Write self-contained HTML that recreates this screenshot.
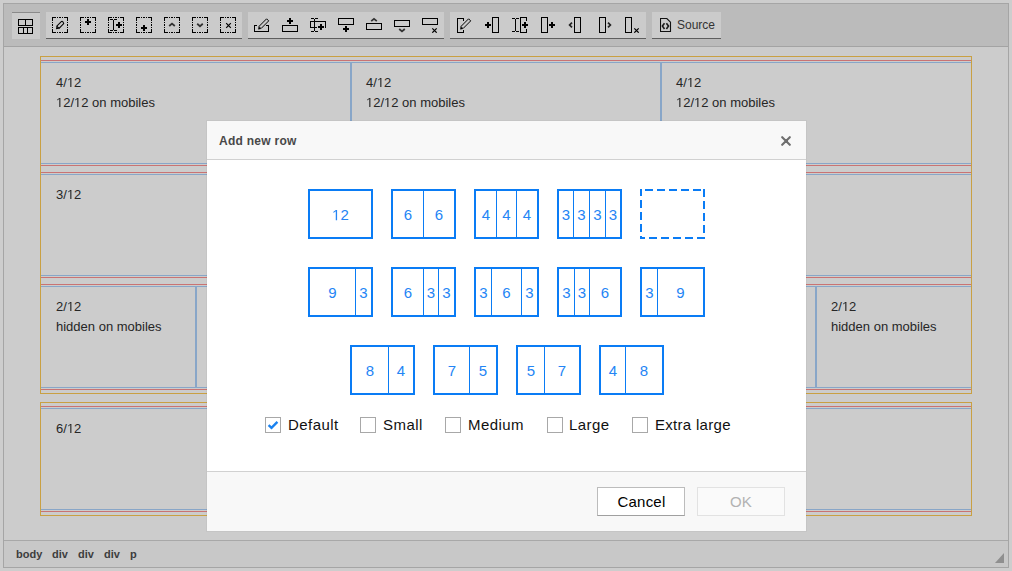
<!DOCTYPE html><html><head><meta charset="utf-8"><style>
*{box-sizing:border-box;margin:0;padding:0}
html,body{width:1012px;height:571px;overflow:hidden;background:#cdcdcd;font-family:"Liberation Sans",sans-serif}
.a{position:absolute}
.one{display:inline-block;width:0.5562em;height:0;position:relative}
.one svg{position:absolute;left:0;bottom:0;width:0.5562em;height:0.688em;overflow:visible}
svg rect{shape-rendering:crispEdges}
#ed{left:3px;top:3px;width:1006px;height:565px;border:1px solid #a5a5a5;background:#cccccc}
#tb{left:4px;top:4px;width:1004px;height:43px;background:#bbbbbb;border-bottom:1px solid #a3a3a3}
.grp{top:12px;height:27px;background:#cbcbcb;border-bottom:1px solid #5e5e5e}
#st{left:4px;top:540px;width:1004px;height:27px;border-top:1px solid #a8a8a8;background:#c8c8c8}
.path{top:547px;font-size:11px;font-weight:bold;color:#3d3d3d;line-height:14px}
.ctr{border:1px solid #c9a043}
.h1{height:1px}
.red{background:#c97373}
.blu{background:#88a6c8}
.txt{font-size:13px;line-height:20px;color:#262626;white-space:nowrap}
#dlg{left:207px;top:121px;width:599px;height:410px;background:#fff;box-shadow:0 0 0 1px rgba(0,0,0,.03)}
#dt{left:0;top:0;width:599px;height:39px;background:#f8f8f8;border-bottom:1px solid #d1d1d1}
#df{left:0;top:350px;width:599px;height:60px;background:#f8f8f8;border-top:1px solid #d1d1d1}
.bx{width:65px;height:50px;border:2px solid #0a7cf5}
.n{top:15px;font-size:15px;line-height:17px;color:#2485f5;text-align:center}
.dv{top:0;width:1px;height:46px;background:#0a7cf5}
.cb{top:417px;width:16px;height:16px;border:1px solid #a8a8a8;background:#fff}
.lbl{top:415px;font-size:15px;line-height:20px;color:#111;letter-spacing:0.45px;white-space:nowrap}
.btn{top:487px;width:88px;height:29px;font-size:15px;line-height:27px;text-align:center;letter-spacing:0.2px}
</style></head><body>
<div id="ed" class="a"></div><div id="tb" class="a"></div>
<div class="a grp" style="left:12px;width:28px;border-bottom:0;border-top:1px solid #8a8a8a"></div>
<div class="a grp" style="left:46px;width:196px"></div>
<div class="a grp" style="left:248px;width:196px"></div>
<div class="a grp" style="left:450px;width:196px"></div>
<div class="a grp" style="left:652px;width:69px"></div>
<svg class="a" style="left:18px;top:19px" width="16" height="16" viewBox="0 0 16 16"><rect x="0" y="0" width="15" height="1" fill="#000"/><rect x="0" y="6" width="15" height="1" fill="#000"/><rect x="0" y="0" width="1" height="7" fill="#000"/><rect x="14" y="0" width="1" height="7" fill="#000"/><rect x="7" y="0" width="1" height="7" fill="#000"/><rect x="0" y="8" width="15" height="1" fill="#000"/><rect x="0" y="14" width="15" height="1" fill="#000"/><rect x="0" y="8" width="1" height="7" fill="#000"/><rect x="14" y="8" width="1" height="7" fill="#000"/><rect x="5" y="8" width="1" height="7" fill="#000"/><rect x="9" y="8" width="1" height="7" fill="#000"/></svg>
<svg class="a" style="left:52px;top:17px" width="16" height="16" viewBox="0 0 16 16"><rect x="0" y="0" width="4" height="1" fill="#000"/><rect x="0" y="15" width="4" height="1" fill="#000"/><rect x="0" y="0" width="1" height="4" fill="#000"/><rect x="15" y="0" width="1" height="4" fill="#000"/><rect x="5" y="0" width="1" height="1" fill="#000"/><rect x="5" y="15" width="1" height="1" fill="#000"/><rect x="0" y="5" width="1" height="1" fill="#000"/><rect x="15" y="5" width="1" height="1" fill="#000"/><rect x="7" y="0" width="2" height="1" fill="#000"/><rect x="7" y="15" width="2" height="1" fill="#000"/><rect x="0" y="7" width="1" height="2" fill="#000"/><rect x="15" y="7" width="1" height="2" fill="#000"/><rect x="10" y="0" width="1" height="1" fill="#000"/><rect x="10" y="15" width="1" height="1" fill="#000"/><rect x="0" y="10" width="1" height="1" fill="#000"/><rect x="15" y="10" width="1" height="1" fill="#000"/><rect x="12" y="0" width="4" height="1" fill="#000"/><rect x="12" y="15" width="4" height="1" fill="#000"/><rect x="0" y="12" width="1" height="4" fill="#000"/><rect x="15" y="12" width="1" height="4" fill="#000"/><path d="M4.8 9.2 L9.5 4.5 Q10.9 3.7 11.7 6.7 L7.0 11.4 Z" fill="none" stroke="#000" stroke-width="1.05"/><path d="M4.5 9.4 L6.8 11.7 L3.9 12.3 Z" fill="#000"/></svg>
<svg class="a" style="left:80px;top:17px" width="16" height="16" viewBox="0 0 16 16"><rect x="0" y="0" width="4" height="1" fill="#000"/><rect x="0" y="15" width="4" height="1" fill="#000"/><rect x="0" y="0" width="1" height="4" fill="#000"/><rect x="15" y="0" width="1" height="4" fill="#000"/><rect x="5" y="0" width="1" height="1" fill="#000"/><rect x="5" y="15" width="1" height="1" fill="#000"/><rect x="0" y="5" width="1" height="1" fill="#000"/><rect x="15" y="5" width="1" height="1" fill="#000"/><rect x="7" y="0" width="2" height="1" fill="#000"/><rect x="7" y="15" width="2" height="1" fill="#000"/><rect x="0" y="7" width="1" height="2" fill="#000"/><rect x="15" y="7" width="1" height="2" fill="#000"/><rect x="10" y="0" width="1" height="1" fill="#000"/><rect x="10" y="15" width="1" height="1" fill="#000"/><rect x="0" y="10" width="1" height="1" fill="#000"/><rect x="15" y="10" width="1" height="1" fill="#000"/><rect x="12" y="0" width="4" height="1" fill="#000"/><rect x="12" y="15" width="4" height="1" fill="#000"/><rect x="0" y="12" width="1" height="4" fill="#000"/><rect x="15" y="12" width="1" height="4" fill="#000"/><rect x="5" y="4" width="6" height="2" fill="#000"/><rect x="7" y="2" width="2" height="6" fill="#000"/></svg>
<svg class="a" style="left:108px;top:17px" width="16" height="16" viewBox="0 0 16 16"><rect x="0" y="0" width="4" height="1" fill="#000"/><rect x="0" y="15" width="4" height="1" fill="#000"/><rect x="0" y="0" width="1" height="4" fill="#000"/><rect x="15" y="0" width="1" height="4" fill="#000"/><rect x="5" y="0" width="1" height="1" fill="#000"/><rect x="5" y="15" width="1" height="1" fill="#000"/><rect x="0" y="5" width="1" height="1" fill="#000"/><rect x="15" y="5" width="1" height="1" fill="#000"/><rect x="7" y="0" width="2" height="1" fill="#000"/><rect x="7" y="15" width="2" height="1" fill="#000"/><rect x="0" y="7" width="1" height="2" fill="#000"/><rect x="15" y="7" width="1" height="2" fill="#000"/><rect x="10" y="0" width="1" height="1" fill="#000"/><rect x="10" y="15" width="1" height="1" fill="#000"/><rect x="0" y="10" width="1" height="1" fill="#000"/><rect x="15" y="10" width="1" height="1" fill="#000"/><rect x="12" y="0" width="4" height="1" fill="#000"/><rect x="12" y="15" width="4" height="1" fill="#000"/><rect x="0" y="12" width="1" height="4" fill="#000"/><rect x="15" y="12" width="1" height="4" fill="#000"/><rect x="2" y="2" width="3" height="1" fill="#000"/><rect x="6" y="2" width="3" height="1" fill="#000"/><rect x="5" y="3" width="1" height="10" fill="#000"/><rect x="2" y="13" width="3" height="1" fill="#000"/><rect x="6" y="13" width="3" height="1" fill="#000"/><rect x="8" y="7" width="6" height="2" fill="#000"/><rect x="10" y="5" width="2" height="6" fill="#000"/></svg>
<svg class="a" style="left:136px;top:17px" width="16" height="16" viewBox="0 0 16 16"><rect x="0" y="0" width="4" height="1" fill="#000"/><rect x="0" y="15" width="4" height="1" fill="#000"/><rect x="0" y="0" width="1" height="4" fill="#000"/><rect x="15" y="0" width="1" height="4" fill="#000"/><rect x="5" y="0" width="1" height="1" fill="#000"/><rect x="5" y="15" width="1" height="1" fill="#000"/><rect x="0" y="5" width="1" height="1" fill="#000"/><rect x="15" y="5" width="1" height="1" fill="#000"/><rect x="7" y="0" width="2" height="1" fill="#000"/><rect x="7" y="15" width="2" height="1" fill="#000"/><rect x="0" y="7" width="1" height="2" fill="#000"/><rect x="15" y="7" width="1" height="2" fill="#000"/><rect x="10" y="0" width="1" height="1" fill="#000"/><rect x="10" y="15" width="1" height="1" fill="#000"/><rect x="0" y="10" width="1" height="1" fill="#000"/><rect x="15" y="10" width="1" height="1" fill="#000"/><rect x="12" y="0" width="4" height="1" fill="#000"/><rect x="12" y="15" width="4" height="1" fill="#000"/><rect x="0" y="12" width="1" height="4" fill="#000"/><rect x="15" y="12" width="1" height="4" fill="#000"/><rect x="5" y="10" width="6" height="2" fill="#000"/><rect x="7" y="8" width="2" height="6" fill="#000"/></svg>
<svg class="a" style="left:164px;top:17px" width="16" height="16" viewBox="0 0 16 16"><rect x="0" y="0" width="4" height="1" fill="#000"/><rect x="0" y="15" width="4" height="1" fill="#000"/><rect x="0" y="0" width="1" height="4" fill="#000"/><rect x="15" y="0" width="1" height="4" fill="#000"/><rect x="5" y="0" width="1" height="1" fill="#000"/><rect x="5" y="15" width="1" height="1" fill="#000"/><rect x="0" y="5" width="1" height="1" fill="#000"/><rect x="15" y="5" width="1" height="1" fill="#000"/><rect x="7" y="0" width="2" height="1" fill="#000"/><rect x="7" y="15" width="2" height="1" fill="#000"/><rect x="0" y="7" width="1" height="2" fill="#000"/><rect x="15" y="7" width="1" height="2" fill="#000"/><rect x="10" y="0" width="1" height="1" fill="#000"/><rect x="10" y="15" width="1" height="1" fill="#000"/><rect x="0" y="10" width="1" height="1" fill="#000"/><rect x="15" y="10" width="1" height="1" fill="#000"/><rect x="12" y="0" width="4" height="1" fill="#000"/><rect x="12" y="15" width="4" height="1" fill="#000"/><rect x="0" y="12" width="1" height="4" fill="#000"/><rect x="15" y="12" width="1" height="4" fill="#000"/><path d="M5.2 9 L8 6.6 L10.8 9" fill="none" stroke="#333" stroke-width="1.8" stroke-linecap="butt" stroke-linejoin="miter"/></svg>
<svg class="a" style="left:192px;top:17px" width="16" height="16" viewBox="0 0 16 16"><rect x="0" y="0" width="4" height="1" fill="#000"/><rect x="0" y="15" width="4" height="1" fill="#000"/><rect x="0" y="0" width="1" height="4" fill="#000"/><rect x="15" y="0" width="1" height="4" fill="#000"/><rect x="5" y="0" width="1" height="1" fill="#000"/><rect x="5" y="15" width="1" height="1" fill="#000"/><rect x="0" y="5" width="1" height="1" fill="#000"/><rect x="15" y="5" width="1" height="1" fill="#000"/><rect x="7" y="0" width="2" height="1" fill="#000"/><rect x="7" y="15" width="2" height="1" fill="#000"/><rect x="0" y="7" width="1" height="2" fill="#000"/><rect x="15" y="7" width="1" height="2" fill="#000"/><rect x="10" y="0" width="1" height="1" fill="#000"/><rect x="10" y="15" width="1" height="1" fill="#000"/><rect x="0" y="10" width="1" height="1" fill="#000"/><rect x="15" y="10" width="1" height="1" fill="#000"/><rect x="12" y="0" width="4" height="1" fill="#000"/><rect x="12" y="15" width="4" height="1" fill="#000"/><rect x="0" y="12" width="1" height="4" fill="#000"/><rect x="15" y="12" width="1" height="4" fill="#000"/><path d="M5.2 6.8 L8 9.2 L10.8 6.8" fill="none" stroke="#333" stroke-width="1.8" stroke-linecap="butt" stroke-linejoin="miter"/></svg>
<svg class="a" style="left:220px;top:17px" width="16" height="16" viewBox="0 0 16 16"><rect x="0" y="0" width="4" height="1" fill="#000"/><rect x="0" y="15" width="4" height="1" fill="#000"/><rect x="0" y="0" width="1" height="4" fill="#000"/><rect x="15" y="0" width="1" height="4" fill="#000"/><rect x="5" y="0" width="1" height="1" fill="#000"/><rect x="5" y="15" width="1" height="1" fill="#000"/><rect x="0" y="5" width="1" height="1" fill="#000"/><rect x="15" y="5" width="1" height="1" fill="#000"/><rect x="7" y="0" width="2" height="1" fill="#000"/><rect x="7" y="15" width="2" height="1" fill="#000"/><rect x="0" y="7" width="1" height="2" fill="#000"/><rect x="15" y="7" width="1" height="2" fill="#000"/><rect x="10" y="0" width="1" height="1" fill="#000"/><rect x="10" y="15" width="1" height="1" fill="#000"/><rect x="0" y="10" width="1" height="1" fill="#000"/><rect x="15" y="10" width="1" height="1" fill="#000"/><rect x="12" y="0" width="4" height="1" fill="#000"/><rect x="12" y="15" width="4" height="1" fill="#000"/><rect x="0" y="12" width="1" height="4" fill="#000"/><rect x="15" y="12" width="1" height="4" fill="#000"/><path d="M6.2 6.2 L10.8 10.8 M10.8 6.2 L6.2 10.8" stroke="#000" stroke-width="1.2"/></svg>
<svg class="a" style="left:254px;top:17px" width="16" height="16" viewBox="0 0 16 16"><rect x="0" y="8" width="3" height="1" fill="#000"/><rect x="12" y="8" width="3" height="1" fill="#000"/><rect x="0" y="14" width="15" height="1" fill="#000"/><rect x="0" y="8" width="1" height="7" fill="#000"/><rect x="14" y="8" width="1" height="7" fill="#000"/><path d="M4.9 9.5 L12.6 1.8 L14.7 3.9 L7.0 11.6 Z" fill="none" stroke="#000" stroke-width="1"/><path d="M4.6 9.6 L6.9 11.9 L4.1 12.6 Z" fill="#000"/></svg>
<svg class="a" style="left:282px;top:17px" width="16" height="16" viewBox="0 0 16 16"><rect x="0" y="8" width="16" height="1" fill="#000"/><rect x="0" y="14" width="16" height="1" fill="#000"/><rect x="0" y="8" width="1" height="7" fill="#000"/><rect x="15" y="8" width="1" height="7" fill="#000"/><rect x="5" y="3" width="6" height="2" fill="#000"/><rect x="7" y="1" width="2" height="6" fill="#000"/></svg>
<svg class="a" style="left:310px;top:17px" width="16" height="16" viewBox="0 0 16 16"><rect x="1" y="1" width="3" height="1" fill="#000"/><rect x="5" y="1" width="3" height="1" fill="#000"/><rect x="4" y="2" width="1" height="12" fill="#000"/><rect x="1" y="14" width="3" height="1" fill="#000"/><rect x="5" y="14" width="3" height="1" fill="#000"/><rect x="0" y="4" width="16" height="1" fill="#000"/><rect x="0" y="4" width="1" height="7" fill="#000"/><rect x="0" y="10" width="7" height="1" fill="#000"/><rect x="15" y="4" width="1" height="7" fill="#000"/><rect x="8" y="9" width="6" height="2" fill="#000"/><rect x="10" y="7" width="2" height="6" fill="#000"/></svg>
<svg class="a" style="left:338px;top:17px" width="16" height="16" viewBox="0 0 16 16"><rect x="0" y="1" width="16" height="1" fill="#000"/><rect x="0" y="7" width="16" height="1" fill="#000"/><rect x="0" y="1" width="1" height="7" fill="#000"/><rect x="15" y="1" width="1" height="7" fill="#000"/><rect x="5" y="11" width="6" height="2" fill="#000"/><rect x="7" y="9" width="2" height="6" fill="#000"/></svg>
<svg class="a" style="left:366px;top:17px" width="16" height="16" viewBox="0 0 16 16"><rect x="0" y="6" width="16" height="1" fill="#000"/><rect x="0" y="12" width="16" height="1" fill="#000"/><rect x="0" y="6" width="1" height="7" fill="#000"/><rect x="15" y="6" width="1" height="7" fill="#000"/><path d="M5.2 4.1 L8 1.8 L10.8 4.1" fill="none" stroke="#333" stroke-width="1.8" stroke-linecap="butt" stroke-linejoin="miter"/></svg>
<svg class="a" style="left:394px;top:17px" width="16" height="16" viewBox="0 0 16 16"><rect x="0" y="3" width="16" height="1" fill="#000"/><rect x="0" y="9" width="16" height="1" fill="#000"/><rect x="0" y="3" width="1" height="7" fill="#000"/><rect x="15" y="3" width="1" height="7" fill="#000"/><path d="M5.2 12 L8 14.4 L10.8 12" fill="none" stroke="#333" stroke-width="1.8" stroke-linecap="butt" stroke-linejoin="miter"/></svg>
<svg class="a" style="left:422px;top:17px" width="16" height="16" viewBox="0 0 16 16"><rect x="0" y="1" width="16" height="1" fill="#000"/><rect x="0" y="7" width="16" height="1" fill="#000"/><rect x="0" y="1" width="1" height="7" fill="#000"/><rect x="15" y="1" width="1" height="7" fill="#000"/><path d="M10.3 11.3 L14.7 15.7 M14.7 11.3 L10.3 15.7" stroke="#000" stroke-width="1.2"/></svg>
<svg class="a" style="left:456px;top:17px" width="16" height="16" viewBox="0 0 16 16"><rect x="1" y="1" width="7" height="1" fill="#000"/><rect x="1" y="15" width="7" height="1" fill="#000"/><rect x="1" y="1" width="1" height="15" fill="#000"/><rect x="7" y="1" width="1" height="3" fill="#000"/><rect x="7" y="13" width="1" height="3" fill="#000"/><path d="M4.9 9.5 L12.6 1.8 L14.7 3.9 L7.0 11.6 Z" fill="none" stroke="#000" stroke-width="1"/><path d="M4.6 9.6 L6.9 11.9 L4.1 12.6 Z" fill="#000"/></svg>
<svg class="a" style="left:484px;top:17px" width="16" height="16" viewBox="0 0 16 16"><rect x="1" y="7" width="6" height="2" fill="#000"/><rect x="3" y="5" width="2" height="6" fill="#000"/><rect x="8" y="0" width="7" height="1" fill="#000"/><rect x="8" y="15" width="7" height="1" fill="#000"/><rect x="8" y="0" width="1" height="16" fill="#000"/><rect x="14" y="0" width="1" height="16" fill="#000"/></svg>
<svg class="a" style="left:512px;top:17px" width="16" height="16" viewBox="0 0 16 16"><rect x="0" y="1" width="3" height="1" fill="#000"/><rect x="4" y="1" width="3" height="1" fill="#000"/><rect x="3" y="2" width="1" height="12" fill="#000"/><rect x="0" y="14" width="3" height="1" fill="#000"/><rect x="4" y="14" width="3" height="1" fill="#000"/><rect x="8" y="0" width="7" height="1" fill="#000"/><rect x="8" y="15" width="7" height="1" fill="#000"/><rect x="8" y="0" width="1" height="16" fill="#000"/><rect x="14" y="0" width="1" height="4" fill="#000"/><rect x="14" y="12" width="1" height="4" fill="#000"/><rect x="10" y="7" width="6" height="2" fill="#000"/><rect x="12" y="5" width="2" height="6" fill="#000"/></svg>
<svg class="a" style="left:540px;top:17px" width="16" height="16" viewBox="0 0 16 16"><rect x="1" y="0" width="7" height="1" fill="#000"/><rect x="1" y="15" width="7" height="1" fill="#000"/><rect x="1" y="0" width="1" height="16" fill="#000"/><rect x="7" y="0" width="1" height="16" fill="#000"/><rect x="9" y="7" width="6" height="2" fill="#000"/><rect x="11" y="5" width="2" height="6" fill="#000"/></svg>
<svg class="a" style="left:568px;top:17px" width="16" height="16" viewBox="0 0 16 16"><path d="M4 5.6 L1.6 8 L4 10.4" fill="none" stroke="#222" stroke-width="1.7" stroke-linecap="butt" stroke-linejoin="miter"/><rect x="6" y="0" width="7" height="1" fill="#000"/><rect x="6" y="15" width="7" height="1" fill="#000"/><rect x="6" y="0" width="1" height="16" fill="#000"/><rect x="12" y="0" width="1" height="16" fill="#000"/></svg>
<svg class="a" style="left:596px;top:17px" width="16" height="16" viewBox="0 0 16 16"><rect x="3" y="0" width="7" height="1" fill="#000"/><rect x="3" y="15" width="7" height="1" fill="#000"/><rect x="3" y="0" width="1" height="16" fill="#000"/><rect x="9" y="0" width="1" height="16" fill="#000"/><path d="M12 5.6 L14.4 8 L12 10.4" fill="none" stroke="#222" stroke-width="1.7" stroke-linecap="butt" stroke-linejoin="miter"/></svg>
<svg class="a" style="left:624px;top:17px" width="16" height="16" viewBox="0 0 16 16"><rect x="1" y="0" width="7" height="1" fill="#000"/><rect x="1" y="15" width="7" height="1" fill="#000"/><rect x="1" y="0" width="1" height="16" fill="#000"/><rect x="7" y="0" width="1" height="16" fill="#000"/><path d="M10.3 11.3 L14.7 15.7 M14.7 11.3 L10.3 15.7" stroke="#000" stroke-width="1.2"/></svg>
<svg class="a" style="left:660px;top:18px" width="12" height="14" viewBox="0 0 12 14"><path d="M0.5 0.5 H6.8 L10.5 4.2 V13.5 H0.5 Z" fill="none" stroke="#111" stroke-width="1.1"/><path d="M4.5 5.3 L2.4 8.1 L4.5 10.9" fill="none" stroke="#1a1a1a" stroke-width="1.6" stroke-linecap="butt" stroke-linejoin="miter"/><path d="M6.4 5.3 L8.5 8.1 L6.4 10.9" fill="none" stroke="#1a1a1a" stroke-width="1.6" stroke-linecap="butt" stroke-linejoin="miter"/></svg>
<div class="a" style="left:677px;top:18px;font-size:12px;line-height:14px;color:#333">Source</div>
<div class="a ctr" style="left:40px;top:56px;width:932px;height:338px"></div>
<div class="a ctr" style="left:40px;top:402px;width:932px;height:114px"></div>
<div class="a h1 red" style="left:41px;top:60px;width:930px"></div>
<div class="a h1 blu" style="left:41px;top:62px;width:930px"></div>
<div class="a h1 blu" style="left:41px;top:163px;width:930px"></div>
<div class="a h1 red" style="left:41px;top:165px;width:930px"></div>
<div class="a blu" style="left:350px;top:63px;width:2px;height:100px"></div>
<div class="a blu" style="left:660px;top:63px;width:2px;height:100px"></div>
<div class="a txt" style="left:56px;top:73px">4/<span class="one"><svg viewBox="0 0 1139 1409" preserveAspectRatio="none"><path d="M515 1409V172L197 399V229L530 0H696V1409Z" fill="currentColor"/></svg></span>2<br><span class="one"><svg viewBox="0 0 1139 1409" preserveAspectRatio="none"><path d="M515 1409V172L197 399V229L530 0H696V1409Z" fill="currentColor"/></svg></span>2/<span class="one"><svg viewBox="0 0 1139 1409" preserveAspectRatio="none"><path d="M515 1409V172L197 399V229L530 0H696V1409Z" fill="currentColor"/></svg></span>2 on mobiles</div>
<div class="a txt" style="left:366px;top:73px">4/<span class="one"><svg viewBox="0 0 1139 1409" preserveAspectRatio="none"><path d="M515 1409V172L197 399V229L530 0H696V1409Z" fill="currentColor"/></svg></span>2<br><span class="one"><svg viewBox="0 0 1139 1409" preserveAspectRatio="none"><path d="M515 1409V172L197 399V229L530 0H696V1409Z" fill="currentColor"/></svg></span>2/<span class="one"><svg viewBox="0 0 1139 1409" preserveAspectRatio="none"><path d="M515 1409V172L197 399V229L530 0H696V1409Z" fill="currentColor"/></svg></span>2 on mobiles</div>
<div class="a txt" style="left:676px;top:73px">4/<span class="one"><svg viewBox="0 0 1139 1409" preserveAspectRatio="none"><path d="M515 1409V172L197 399V229L530 0H696V1409Z" fill="currentColor"/></svg></span>2<br><span class="one"><svg viewBox="0 0 1139 1409" preserveAspectRatio="none"><path d="M515 1409V172L197 399V229L530 0H696V1409Z" fill="currentColor"/></svg></span>2/<span class="one"><svg viewBox="0 0 1139 1409" preserveAspectRatio="none"><path d="M515 1409V172L197 399V229L530 0H696V1409Z" fill="currentColor"/></svg></span>2 on mobiles</div>
<div class="a h1 red" style="left:41px;top:172px;width:930px"></div>
<div class="a h1 blu" style="left:41px;top:174px;width:930px"></div>
<div class="a h1 blu" style="left:41px;top:275px;width:930px"></div>
<div class="a h1 red" style="left:41px;top:277px;width:930px"></div>
<div class="a blu" style="left:273px;top:175px;width:2px;height:100px"></div>
<div class="a blu" style="left:505px;top:175px;width:2px;height:100px"></div>
<div class="a blu" style="left:737px;top:175px;width:2px;height:100px"></div>
<div class="a txt" style="left:56px;top:185px">3/<span class="one"><svg viewBox="0 0 1139 1409" preserveAspectRatio="none"><path d="M515 1409V172L197 399V229L530 0H696V1409Z" fill="currentColor"/></svg></span>2</div>
<div class="a txt" style="left:289px;top:185px">3/<span class="one"><svg viewBox="0 0 1139 1409" preserveAspectRatio="none"><path d="M515 1409V172L197 399V229L530 0H696V1409Z" fill="currentColor"/></svg></span>2</div>
<div class="a txt" style="left:521px;top:185px">3/<span class="one"><svg viewBox="0 0 1139 1409" preserveAspectRatio="none"><path d="M515 1409V172L197 399V229L530 0H696V1409Z" fill="currentColor"/></svg></span>2</div>
<div class="a txt" style="left:753px;top:185px">3/<span class="one"><svg viewBox="0 0 1139 1409" preserveAspectRatio="none"><path d="M515 1409V172L197 399V229L530 0H696V1409Z" fill="currentColor"/></svg></span>2</div>
<div class="a h1 red" style="left:41px;top:284px;width:930px"></div>
<div class="a h1 blu" style="left:41px;top:286px;width:930px"></div>
<div class="a h1 blu" style="left:41px;top:387px;width:930px"></div>
<div class="a h1 red" style="left:41px;top:389px;width:930px"></div>
<div class="a blu" style="left:195px;top:287px;width:2px;height:100px"></div>
<div class="a blu" style="left:350px;top:287px;width:2px;height:100px"></div>
<div class="a blu" style="left:505px;top:287px;width:2px;height:100px"></div>
<div class="a blu" style="left:660px;top:287px;width:2px;height:100px"></div>
<div class="a blu" style="left:815px;top:287px;width:2px;height:100px"></div>
<div class="a txt" style="left:56px;top:297px">2/<span class="one"><svg viewBox="0 0 1139 1409" preserveAspectRatio="none"><path d="M515 1409V172L197 399V229L530 0H696V1409Z" fill="currentColor"/></svg></span>2<br>hidden on mobiles</div>
<div class="a txt" style="left:211px;top:297px">2/<span class="one"><svg viewBox="0 0 1139 1409" preserveAspectRatio="none"><path d="M515 1409V172L197 399V229L530 0H696V1409Z" fill="currentColor"/></svg></span>2<br>hidden on mobiles</div>
<div class="a txt" style="left:366px;top:297px">2/<span class="one"><svg viewBox="0 0 1139 1409" preserveAspectRatio="none"><path d="M515 1409V172L197 399V229L530 0H696V1409Z" fill="currentColor"/></svg></span>2<br>hidden on mobiles</div>
<div class="a txt" style="left:521px;top:297px">2/<span class="one"><svg viewBox="0 0 1139 1409" preserveAspectRatio="none"><path d="M515 1409V172L197 399V229L530 0H696V1409Z" fill="currentColor"/></svg></span>2<br>hidden on mobiles</div>
<div class="a txt" style="left:676px;top:297px">2/<span class="one"><svg viewBox="0 0 1139 1409" preserveAspectRatio="none"><path d="M515 1409V172L197 399V229L530 0H696V1409Z" fill="currentColor"/></svg></span>2<br>hidden on mobiles</div>
<div class="a txt" style="left:831px;top:297px">2/<span class="one"><svg viewBox="0 0 1139 1409" preserveAspectRatio="none"><path d="M515 1409V172L197 399V229L530 0H696V1409Z" fill="currentColor"/></svg></span>2<br>hidden on mobiles</div>
<div class="a h1 red" style="left:41px;top:406px;width:930px"></div>
<div class="a h1 blu" style="left:41px;top:408px;width:930px"></div>
<div class="a h1 blu" style="left:41px;top:509px;width:930px"></div>
<div class="a h1 red" style="left:41px;top:511px;width:930px"></div>
<div class="a blu" style="left:505px;top:409px;width:2px;height:100px"></div>
<div class="a txt" style="left:56px;top:419px">6/<span class="one"><svg viewBox="0 0 1139 1409" preserveAspectRatio="none"><path d="M515 1409V172L197 399V229L530 0H696V1409Z" fill="currentColor"/></svg></span>2</div>
<div class="a txt" style="left:521px;top:419px">6/<span class="one"><svg viewBox="0 0 1139 1409" preserveAspectRatio="none"><path d="M515 1409V172L197 399V229L530 0H696V1409Z" fill="currentColor"/></svg></span>2</div>
<div id="st" class="a"></div>
<div class="a path" style="left:16px">body</div>
<div class="a path" style="left:52px">div</div>
<div class="a path" style="left:78px">div</div>
<div class="a path" style="left:104px">div</div>
<div class="a path" style="left:130px">p</div>
<svg class="a" style="left:995px;top:553px" width="9" height="10"><path d="M9 0V10H0Z" fill="#8f8f8f"/></svg>
<div id="dlg" class="a"><div id="dt" class="a"></div>
<div class="a" style="left:12px;top:13px;font-size:12px;font-weight:bold;color:#484848;line-height:14px;white-space:nowrap;letter-spacing:0.27px">Add new row</div>
<svg class="a" style="left:574px;top:15px" width="10" height="10"><path d="M1.2 1.2L8.8 8.8M8.8 1.2L1.2 8.8" stroke="#6e6e6e" stroke-width="2.1" stroke-linecap="round"/><rect x="3.5" y="3.5" width="3" height="3" fill="#6e6e6e"/></svg>
<div id="df" class="a"></div>
</div>
<div class="a bx" style="left:308px;top:189px">
<div class="a n" style="left:0px;width:61px"><span class="one"><svg viewBox="0 0 1139 1409" preserveAspectRatio="none"><path d="M515 1409V172L197 399V229L530 0H696V1409Z" fill="currentColor"/></svg></span>2</div>
</div>
<div class="a bx" style="left:391px;top:189px">
<div class="a dv" style="left:30px"></div>
<div class="a n" style="left:0px;width:30px">6</div>
<div class="a n" style="left:31px;width:30px">6</div>
</div>
<div class="a bx" style="left:474px;top:189px">
<div class="a dv" style="left:20px"></div>
<div class="a dv" style="left:40px"></div>
<div class="a n" style="left:0px;width:20px">4</div>
<div class="a n" style="left:21px;width:19px">4</div>
<div class="a n" style="left:41px;width:20px">4</div>
</div>
<div class="a bx" style="left:557px;top:189px">
<div class="a dv" style="left:14px"></div>
<div class="a dv" style="left:30px"></div>
<div class="a dv" style="left:46px"></div>
<div class="a n" style="left:0px;width:14px">3</div>
<div class="a n" style="left:15px;width:15px">3</div>
<div class="a n" style="left:31px;width:15px">3</div>
<div class="a n" style="left:47px;width:14px">3</div>
</div>
<div class="a bx" style="left:308px;top:267px">
<div class="a dv" style="left:45px"></div>
<div class="a n" style="left:0px;width:45px">9</div>
<div class="a n" style="left:46px;width:15px">3</div>
</div>
<div class="a bx" style="left:391px;top:267px">
<div class="a dv" style="left:30px"></div>
<div class="a dv" style="left:45px"></div>
<div class="a n" style="left:0px;width:30px">6</div>
<div class="a n" style="left:31px;width:14px">3</div>
<div class="a n" style="left:46px;width:15px">3</div>
</div>
<div class="a bx" style="left:474px;top:267px">
<div class="a dv" style="left:15px"></div>
<div class="a dv" style="left:45px"></div>
<div class="a n" style="left:0px;width:15px">3</div>
<div class="a n" style="left:16px;width:29px">6</div>
<div class="a n" style="left:46px;width:15px">3</div>
</div>
<div class="a bx" style="left:557px;top:267px">
<div class="a dv" style="left:15px"></div>
<div class="a dv" style="left:30px"></div>
<div class="a n" style="left:0px;width:15px">3</div>
<div class="a n" style="left:16px;width:14px">3</div>
<div class="a n" style="left:31px;width:30px">6</div>
</div>
<div class="a bx" style="left:640px;top:267px">
<div class="a dv" style="left:15px"></div>
<div class="a n" style="left:0px;width:15px">3</div>
<div class="a n" style="left:16px;width:45px">9</div>
</div>
<div class="a bx" style="left:350px;top:345px">
<div class="a dv" style="left:36px"></div>
<div class="a n" style="left:0px;width:36px">8</div>
<div class="a n" style="left:37px;width:24px">4</div>
</div>
<div class="a bx" style="left:433px;top:345px">
<div class="a dv" style="left:34px"></div>
<div class="a n" style="left:0px;width:34px">7</div>
<div class="a n" style="left:35px;width:26px">5</div>
</div>
<div class="a bx" style="left:516px;top:345px">
<div class="a dv" style="left:26px"></div>
<div class="a n" style="left:0px;width:26px">5</div>
<div class="a n" style="left:27px;width:34px">7</div>
</div>
<div class="a bx" style="left:599px;top:345px">
<div class="a dv" style="left:24px"></div>
<div class="a n" style="left:0px;width:24px">4</div>
<div class="a n" style="left:25px;width:36px">8</div>
</div>
<svg class="a" style="left:640px;top:189px" width="65" height="50"><g fill="#0a7cf5"><rect x="5" y="0" width="8" height="2"/><rect x="17" y="0" width="8" height="2"/><rect x="29" y="0" width="8" height="2"/><rect x="41" y="0" width="8" height="2"/><rect x="53" y="0" width="8" height="2"/><rect x="63" y="0" width="2" height="8"/><rect x="63" y="12" width="2" height="8"/><rect x="63" y="24" width="2" height="8"/><rect x="63" y="36" width="2" height="8"/><rect x="0" y="48" width="5" height="2"/><rect x="9" y="48" width="8" height="2"/><rect x="21" y="48" width="8" height="2"/><rect x="33" y="48" width="8" height="2"/><rect x="45" y="48" width="8" height="2"/><rect x="57" y="48" width="8" height="2"/><rect x="0" y="0" width="2" height="7"/><rect x="0" y="11" width="2" height="8"/><rect x="0" y="23" width="2" height="8"/><rect x="0" y="35" width="2" height="8"/><rect x="0" y="47" width="2" height="3"/></g></svg>
<div class="a cb" style="left:265px"></div>
<svg class="a" style="left:265px;top:417px" width="16" height="16"><path d="M3.6 8.1L6.5 10.8L12.4 4.8" fill="none" stroke="#1a82f0" stroke-width="2.4"/></svg>
<div class="a lbl" style="left:288px">Default</div>
<div class="a cb" style="left:360px"></div>
<div class="a lbl" style="left:383px">Small</div>
<div class="a cb" style="left:445px"></div>
<div class="a lbl" style="left:468px">Medium</div>
<div class="a cb" style="left:547px"></div>
<div class="a lbl" style="left:569px">Large</div>
<div class="a cb" style="left:632px"></div>
<div class="a lbl" style="left:655px;letter-spacing:0.3px">Extra large</div>
<div class="a btn" style="left:597px;background:#fff;border:1px solid #bcbcbc;border-bottom-color:#a0a0a0;color:#000;padding-left:1px">Cancel</div>
<div class="a btn" style="left:697px;background:#fafafa;border:1px solid #e2e2e2;color:#b2b2b2">OK</div>
</body></html>
